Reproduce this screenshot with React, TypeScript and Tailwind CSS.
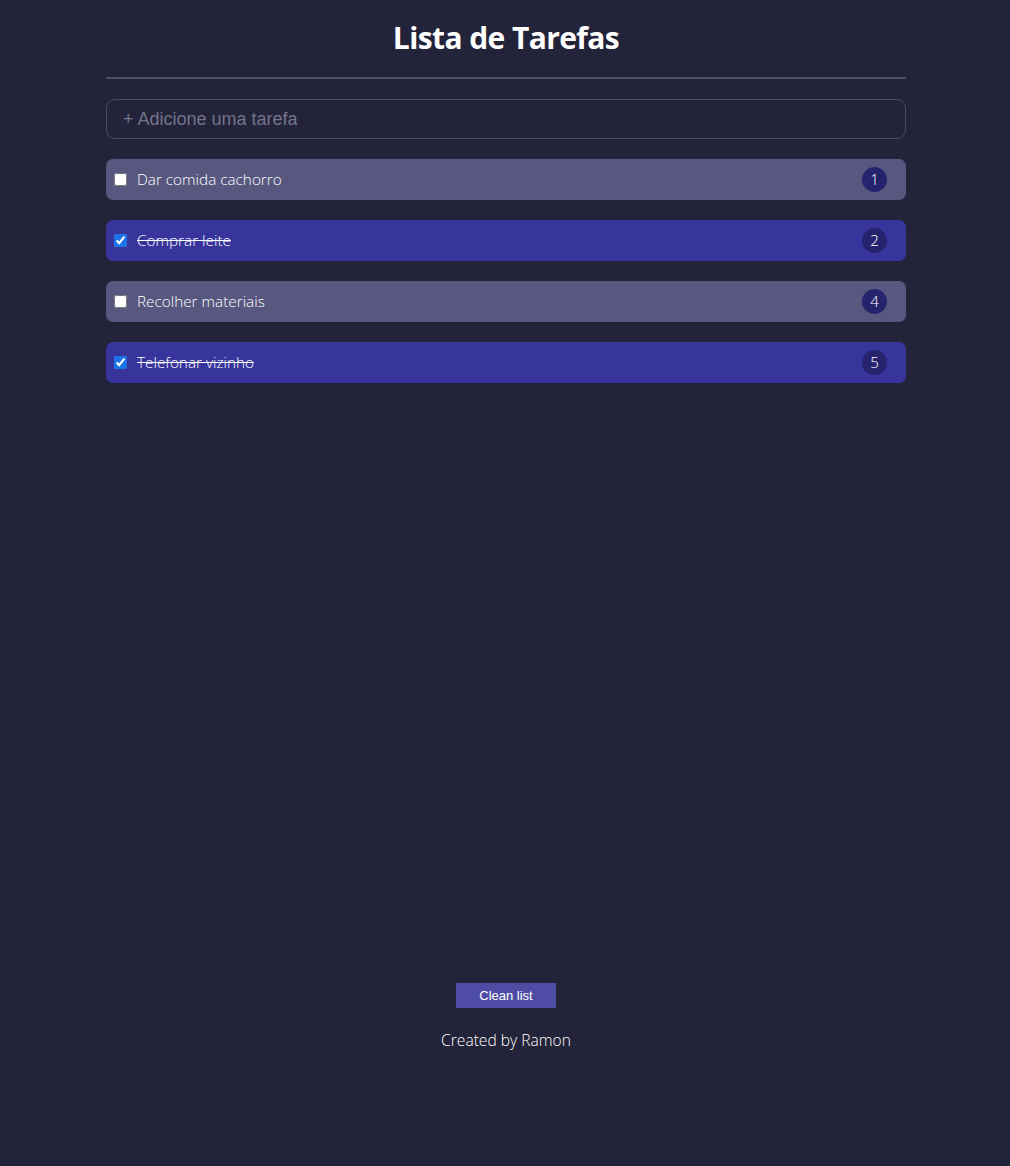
export default function App() {
  const tasks = [
    { id: 1, text: "Dar comida cachorro", done: false },
    { id: 2, text: "Comprar leite", done: true },
    { id: 4, text: "Recolher materiais", done: false },
    { id: 5, text: "Telefonar vizinho", done: true },
  ];

  return (
    <div className="min-h-[1166px] bg-[#232339] pl-[2px] text-white font-['Open_Sans',sans-serif]">
      <div className="mx-auto w-[800px] flex flex-col">
        <h1 className="pt-[18px] pb-[19px] text-center text-[30px] font-bold leading-[40px] tracking-[-0.6px]">
          Lista de Tarefas
        </h1>
        <hr className="border-0 h-[2px] bg-[#4e4e66]" />

        {/* add task */}
        <input
          type="text"
          placeholder="+ Adicione uma tarefa"
          className="mt-[20px] h-[40px] w-full rounded-[9px] border border-[#4a4a62] bg-transparent px-[16px] font-['Liberation_Sans',sans-serif] text-[18px] text-white placeholder:text-[#74748a] outline-none"
        />

        {/* task list */}
        <ul className="mt-[20px] flex h-[824px] flex-col gap-[20px]">
          {tasks.map((t) => (
            <li
              key={t.id}
              className={
                "flex h-[41px] items-center rounded-[7px] pl-[8px] pr-[19px] " +
                (t.done ? "bg-[#37349c]" : "bg-[#57577f]")
              }
            >
              <input
                type="checkbox"
                defaultChecked={t.done}
                className="m-0 h-[13px] w-[13px] accent-[#1a73e8]"
              />
              <span
                className={
                  "ml-[10px] flex-1 text-[15.3px] font-light " +
                  (t.done ? "line-through" : "")
                }
              >
                {t.text}
              </span>
              <span className="flex h-[25px] w-[25px] items-center justify-center rounded-full bg-[#25236e] text-[15px] font-light">
                {t.id}
              </span>
            </li>
          ))}
        </ul>

        <div className="flex flex-col items-center">
          <button className="h-[25px] w-[100px] bg-[#4f4ca6] font-['Liberation_Sans',sans-serif] text-[13px] text-white">
            Clean list
          </button>
          <p className="mt-[21px] text-[15.6px] font-light">Created by Ramon</p>
        </div>
      </div>
    </div>
  );
}
